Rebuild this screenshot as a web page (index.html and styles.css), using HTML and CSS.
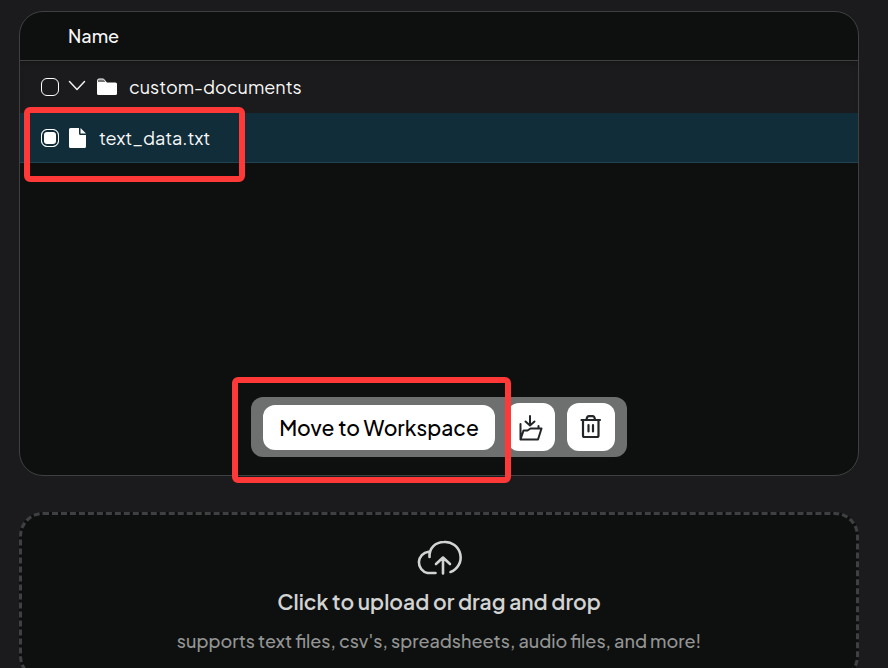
FILE: index.html
```
<!DOCTYPE html>
<html lang="en">
<head>
	<meta charset="utf-8">
	<title>Documents</title>
	<meta name="viewport" content="width=device-width, initial-scale=1">
	<link rel="stylesheet" href="styles.css">
</head>
<body>
<main class="documents">
	<section class="picker">
		<h2 class="picker-head">Name</h2>
		<ul class="files">
			<li class="row folder">
				<input type="checkbox" class="check" id="folder">
				<button type="button" class="toggle" aria-label="Collapse folder">
					<svg width="18" height="18" viewBox="0 0 18 18" fill="none" stroke="currentColor" stroke-width="1.500" stroke-linecap="round" stroke-linejoin="round"><path d="M1.500 3.500l7.500 8 7.500-8"/></svg>
				</button>
				<svg class="folder-icon" width="20" height="18" viewBox="0 0 20 18"><path fill="#fff" d="M0 4.500h18.500q1.500 0 1.500 1.500v9.500q0 1.500-1.500 1.500h-17Q0 17 0 15.500z"/><path fill="#777" stroke="#fff" d="M.5 4.500v-2q0-1.500 1.500-1.500h4.500l3 3.500z"/></svg>
				<label for="folder">custom-documents</label>
			</li>
			<li class="row file selected">
				<input type="checkbox" class="check" id="file" checked>
				<svg width="18" height="20" viewBox="0 0 18 20"><path fill="#fff" d="M1.500 0H10v5.500Q10 7 11.500 7H17v11.500q0 1.500-1.500 1.500h-14Q0 20 0 18.500v-17Q0 0 1.500 0z"/><path fill="#fff" d="M11.500 0L17 5.500h-5.500z"/></svg>
				<label for="file">text_data.txt</label>
				<span class="mark mark-file"></span>
			</li>
		</ul>
		<div class="actions">
			<button type="button" class="move">Move to Workspace</button>
			<button type="button" class="action" aria-label="Move to folder">
				<svg width="28" height="28" viewBox="0 0 28 28" fill="none" stroke="currentColor" stroke-width="2" stroke-linecap="round" stroke-linejoin="round"><path d="M3.500 26.500V11M3.500 26.500l3-9h4l3-2h11l-3.500 11zM21.500 13v2.500M13 3v9M8.500 8.500L13 12.500l4.500-4"/></svg>
			</button>
			<button type="button" class="action" aria-label="Delete">
				<svg width="28" height="28" viewBox="0 0 28 28" fill="none" stroke="currentColor" stroke-width="2.200" stroke-linecap="round" stroke-linejoin="round"><path d="M4.500 7h18.500M6 7v15.500q0 1.500 1.500 1.500h12.500q1.500 0 1.500-1.500V7M9.500 6.500Q10 3.200 12 3.200h3.500q2 0 2.500 3.300M11.500 12v6.500M16 12v6.500"/></svg>
			</button>
			<span class="mark mark-move"></span>
		</div>
	</section>
	<button type="button" class="dropzone">
		<svg width="48" height="36" viewBox="0 0 48 36" fill="none" stroke="currentColor" stroke-width="2.600" stroke-linecap="round" stroke-linejoin="round"><path d="M20.500 34H12.500A10.800 10.800 0 0 1 13.500 12.700M14.500 18C14 9 20.500 3 29 3A15.500 15.500 0 0 1 35.500 33M28 34.500V18.500M21 25l7-6.500 7 6.500"/></svg>
		<span class="drop-title">Click to upload or drag and drop</span>
		<span class="drop-hint">supports text files, csv's, spreadsheets, audio files, and more!</span>
	</button>
</main>
</body>
</html>
```
FILE: styles.css
```
*{
	box-sizing:border-box;
}
body,button{
	font-family:"Plus Jakarta Sans", Inter, sans-serif;
}
body{
	margin:0;
	height:100vh;
	overflow:hidden;
	background-color:#1b1b1d;
	color:#f8f8f8;
}
button{
	border:0;
	padding:0;
	cursor:pointer;
}
svg{
	display:block;
	flex:none;
}
.documents{
	padding:11px 29px 0 19px;
}
.picker{
	display:flex;
	flex-direction:column;
	background-color:#0e100f;
	border:1px solid #3f4042;
	border-radius:24px;
}
.picker-head{
	margin:0;
	padding:12px 48px;
	border-bottom:1px solid #3f4042;
	font-size:18px;
	line-height:24px;
	font-weight:500;
}
.files{
	list-style:none;
	margin:0;
	padding:0;
	min-height:336px;
}
.row{
	position:relative;
	display:flex;
	align-items:center;
	padding:12px 21px;
	font-size:18px;
	line-height:28px;
}
.folder{
	background-color:#1b1b1d;
	box-shadow:inset 0 5px 6px -3px rgba(0,0,0,.25);
}
.file{
	gap:10px;
	padding:11px 21px 10px;
	border-bottom:1px solid #1f4251;
}
.selected{
	background-color:#112d3a;
}
.check{
	appearance:none;
	flex:none;
	width:18px;
	height:18px;
	margin:0;
	border:1px solid #fff;
	border-radius:6px;
}
.check:checked{
	background-color:#fff;
	box-shadow:inset 0 0 0 2px #112d3a;
}
.toggle{
	margin:0 11px 0 9px;
	background:none;
	color:#f0f0f0;
}
.folder-icon{
	margin-right:12px;
}
.file label{
	margin-left:2px;
}
.actions{
	position:relative;
	align-self:center;
	display:flex;
	align-items:center;
	gap:12px;
	margin-bottom:18px;
	padding:6px 12px;
	background-color:#6e7070;
	border-radius:12px;
}
.move{
	padding:0 16px;
	background-color:#fff;
	border-radius:12px;
	color:#000;
	font-size:21px;
	line-height:45px;
	font-weight:500;
}
.action{
	padding:10px;
	background-color:#fff;
	border-radius:12px;
	color:#222628;
}
/* red callout frames */
.mark{
	position:absolute;
	border:6px solid #ff3838;
	border-radius:6px;
	pointer-events:none;
}
.mark-file{
	top:-6px;
	left:4px;
	width:221px;
	height:75px;
}
.mark-move{
	top:-20px;
	left:-19px;
	width:279px;
	height:106px;
}
.dropzone{
	display:flex;
	flex-direction:column;
	align-items:center;
	width:100%;
	margin-top:36px;
	padding:24px 20px;
	background-color:#0e100f;
	border:3px dashed #3f4042;
	border-radius:24px;
	color:#d2d3d3;
}
.drop-title{
	margin-top:13px;
	font-size:21px;
	line-height:28px;
	font-weight:600;
}
.drop-hint{
	margin-top:13px;
	font-size:18px;
	line-height:24px;
	font-weight:500;
	color:#939494;
}
```
